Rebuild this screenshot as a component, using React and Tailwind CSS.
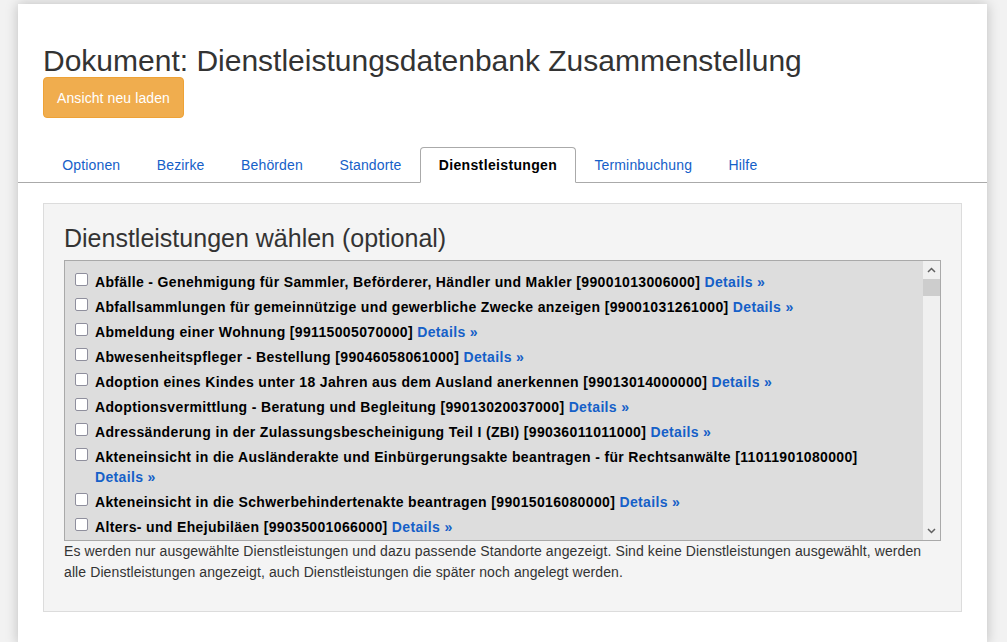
import React from "react";

const tabs = ["Optionen", "Bezirke", "Behörden", "Standorte", "Dienstleistungen", "Terminbuchung", "Hilfe"];

const services = [
  ["Abfälle - Genehmigung für Sammler, Beförderer, Händler und Makler", "99001013006000"],
  ["Abfallsammlungen für gemeinnützige und gewerbliche Zwecke anzeigen", "99001031261000"],
  ["Abmeldung einer Wohnung", "99115005070000"],
  ["Abwesenheitspfleger - Bestellung", "99046058061000"],
  ["Adoption eines Kindes unter 18 Jahren aus dem Ausland anerkennen", "99013014000000"],
  ["Adoptionsvermittlung - Beratung und Begleitung", "99013020037000"],
  ["Adressänderung in der Zulassungsbescheinigung Teil I (ZBI)", "99036011011000"],
  ["Akteneinsicht in die Ausländerakte und Einbürgerungsakte beantragen - für Rechtsanwälte", "11011901080000"],
  ["Akteneinsicht in die Schwerbehindertenakte beantragen", "99015016080000"],
  ["Alters- und Ehejubiläen", "99035001066000"],
];

const Chevron = ({ up }) => (
  <svg width="9" height="6" viewBox="0 0 9 6" className="block">
    <polyline
      points={up ? "1,5 4.5,1.5 8,5" : "1,1 4.5,4.5 8,1"}
      fill="none"
      stroke="#606060"
      strokeWidth="1.5"
    />
  </svg>
);

const App = () => {
  return (
    <div className="min-h-screen bg-[#f2f2f2] pt-[4px]" style={{ fontFamily: '"Liberation Sans", Arial, sans-serif' }}>
      <div className="ml-[18px] w-[969px] min-h-[638px] bg-white shadow-[0_0_12px_rgba(0,0,0,0.22)] pb-8">
        <div className="px-[25px] pt-[40px]">
          <h1 className="text-[30px] leading-[33px] text-[#333]">
            Dokument: Dienstleistungsdatenbank Zusammenstellung
          </h1>
          <button className="h-[41px] px-[13px] rounded-[4px] bg-[#f0ad4e] border border-[#eea236] text-white text-[14px] leading-5 tracking-[0.1px]">
            Ansicht neu laden
          </button>
        </div>

        <ul className="mt-[29px] flex pl-[26px] border-b border-[#aaa]">
          {tabs.map((t) => (
            <li key={t} className="-mb-px">
              {t === "Dienstleistungen" ? (
                <span className="block h-[36px] px-[18px] leading-[35px] text-[14px] font-bold tracking-[0.35px] text-black bg-white border border-[#aaa] border-b-white rounded-t-[4px]">
                  {t}
                </span>
              ) : (
                <span className="block h-[36px] px-[17.25px] leading-[35px] text-[14px] tracking-[0.15px] text-[#1560c8] border border-transparent">
                  {t}
                </span>
              )}
            </li>
          ))}
        </ul>

        <div className="mx-[25px] mt-[20px] h-[409px] bg-[#f4f4f4] border border-[#dcdcdc] px-[20px] pt-[20px]">
          <h3 className="text-[25px] leading-[28px] text-[#333] mb-[8px]">Dienstleistungen wählen (optional)</h3>

          <div className="flex h-[281px] border border-[#a9a9a9] bg-[#dddddd] overflow-hidden">
            <div className="flex-1 flex flex-col gap-[5px] pt-[11px] pl-[10px] pr-[12px] overflow-hidden">
              {services.map(([name, id]) => (
                <div key={id} className="flex items-start gap-[7px] shrink-0">
                  <span className="mt-[1px] w-[13px] h-[13px] shrink-0 bg-white border border-[#8f8f9d] rounded-[2px]" />
                  <span className="text-[14px] leading-5 font-bold tracking-[0.35px] text-black">
                    {name} [{id}] <a className="text-[#1560c8] whitespace-nowrap">Details »</a>
                  </span>
                </div>
              ))}
            </div>
            <div className="w-[17px] shrink-0 bg-[#f0f0f0] flex flex-col items-center">
              <div className="h-[18px] flex items-center justify-center">
                <Chevron up />
              </div>
              <div className="w-[17px] h-[17px] bg-[#cdcdcd]" />
              <div className="flex-1" />
              <div className="h-[18px] flex items-center justify-center">
                <Chevron />
              </div>
            </div>
          </div>

          <p className="text-[14px] leading-[21px] tracking-[0.1px] text-[#333]">
            Es werden nur ausgewählte Dienstleistungen und dazu passende Standorte angezeigt. Sind keine Dienstleistungen ausgewählt, werden alle Dienstleistungen angezeigt, auch Dienstleistungen die später noch angelegt werden.
          </p>
        </div>
      </div>
    </div>
  );
};

export default App;
